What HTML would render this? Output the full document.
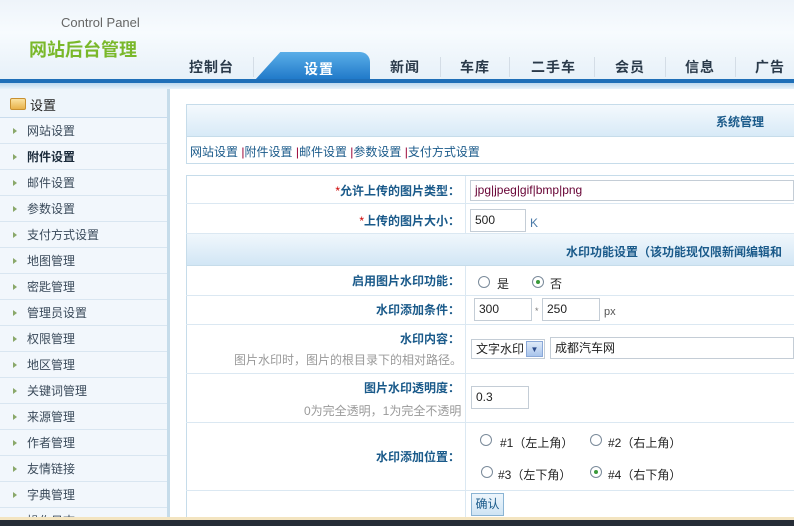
<!DOCTYPE html>
<html><head><meta charset="utf-8"><style>
*{margin:0;padding:0;box-sizing:border-box}
body{width:794px;height:526px;overflow:hidden;position:relative;background:#fff;font-family:"Liberation Sans","Noto Sans CJK SC",sans-serif;font-size:12px;color:#333}
.abs{position:absolute}
#hdr{left:0;top:0;width:794px;height:82px;background:linear-gradient(#eef4fa,#f7fbfe 40%,#e6f0f8)}
#blue{left:0;top:79px;width:794px;height:4px;background:#1f6fb8}
#band{left:0;top:83px;width:794px;height:6px;background:linear-gradient(#bcd8ee,#e8f2fa)}
.tab{top:57px;font-size:14px;font-weight:bold;color:#2a3a4a;letter-spacing:1px}
.sep{top:57px;width:1px;height:20px;background:#d4dde6}
#act{left:255px;top:52px;width:115px;height:28px;background:linear-gradient(#5aaee8,#1f78c8);border-radius:10px 10px 0 0;clip-path:polygon(22% 0,100% 0,100% 100%,0 100%);}
#side{left:0;top:89px;width:170px;height:428px;overflow:hidden;background:#f2f7fc;border-right:3px solid #c6dcea}
.si{position:absolute;left:0;width:167px;height:26px;border-bottom:1px solid #d9e6f1;font-size:12px;color:#3a4a5a;line-height:26px;padding-left:27px}
.si:before{content:"";position:absolute;left:13px;top:10px;border-left:4px solid #8aa86a;border-top:3px solid transparent;border-bottom:3px solid transparent}
.lbl{position:absolute;text-align:right;font-weight:bold;color:#1a5a8a;font-size:12px}
.row{position:absolute;left:186px;width:608px;border-bottom:1px solid #dbe8f2}
.inp{position:absolute;border:1px solid #c4cdd6;background:#fff;font-size:12px;padding-left:4px;color:#222}
.rad{position:absolute;width:12px;height:12px;border:1px solid #7a8a9a;border-radius:50%;background:#fff}
.rad.on:after{content:"";position:absolute;left:3px;top:3px;width:4px;height:4px;border-radius:50%;background:#3a9a3a}
.t{position:absolute;font-size:12px;color:#222;white-space:nowrap}
.g{color:#999}
</style></head><body>
<div id="hdr" class="abs"></div>
<div class="abs" style="left:61px;top:15px;font-size:13px;color:#666">Control Panel</div>
<div class="abs" style="left:29px;top:36px;font-size:18px;font-weight:bold;color:#7ab82a">网站后台管理</div>
<div id="act" class="abs"></div>
<div class="abs tab" style="left:189px">控制台</div>
<div class="sep abs" style="left:253px"></div>
<div class="abs tab" style="left:304px;top:59px;color:#fff">设置</div>
<div class="abs tab" style="left:390px">新闻</div>
<div class="sep abs" style="left:440px"></div>
<div class="abs tab" style="left:460px">车库</div>
<div class="sep abs" style="left:509px"></div>
<div class="abs tab" style="left:531px">二手车</div>
<div class="sep abs" style="left:594px"></div>
<div class="abs tab" style="left:615px">会员</div>
<div class="sep abs" style="left:665px"></div>
<div class="abs tab" style="left:685px">信息</div>
<div class="sep abs" style="left:735px"></div>
<div class="abs tab" style="left:755px">广告</div>
<div id="blue" class="abs"></div><div id="band" class="abs"></div>

<div id="side" class="abs">
<div style="position:absolute;left:0;top:0;width:167px;height:29px;border-bottom:1px solid #c9dced;background:#eef5fb"></div>
<div style="position:absolute;left:10px;top:9px;width:16px;height:12px;background:linear-gradient(#fbe2a0,#e8b24a);border:1px solid #c89030;border-radius:2px"></div>
<div style="position:absolute;left:30px;top:6px;font-size:13px;color:#222">设置</div>
<div class="si" style="top:29px">网站设置</div>
<div class="si" style="top:55px;font-weight:bold;color:#1a2a3a">附件设置</div>
<div class="si" style="top:81px">邮件设置</div>
<div class="si" style="top:107px">参数设置</div>
<div class="si" style="top:133px">支付方式设置</div>
<div class="si" style="top:159px">地图管理</div>
<div class="si" style="top:185px">密匙管理</div>
<div class="si" style="top:211px">管理员设置</div>
<div class="si" style="top:237px">权限管理</div>
<div class="si" style="top:263px">地区管理</div>
<div class="si" style="top:289px">关键词管理</div>
<div class="si" style="top:315px">来源管理</div>
<div class="si" style="top:341px">作者管理</div>
<div class="si" style="top:367px">友情链接</div>
<div class="si" style="top:393px">字典管理</div>
<div class="si" style="top:419px">操作日志</div>
</div>

<div class="abs" style="left:186px;top:104px;width:608px;height:60px;border:1px solid #c6dcea;border-right:none"></div>
<div class="abs" style="left:187px;top:105px;width:607px;height:32px;background:linear-gradient(#f4f9fd,#d8eaf7);border-bottom:1px solid #c6dcea"></div>
<div class="abs" style="left:716px;top:113px;font-weight:bold;color:#1a5a8a">系统管理</div>
<div class="abs" style="left:190px;top:143px;color:#1a5a8a">网站设置 <span style="color:#903">|</span>附件设置 <span style="color:#903">|</span>邮件设置 <span style="color:#903">|</span>参数设置 <span style="color:#903">|</span>支付方式设置</div>

<div class="abs" style="left:186px;top:175px;width:608px;height:345px;border:1px solid #c6dcea;border-right:none"></div>
<div class="abs" style="left:465px;top:176px;width:1px;height:58px;background:#dbe8f2"></div>
<div class="abs" style="left:465px;top:266px;width:1px;height:254px;background:#dbe8f2"></div>
<div class="row" style="top:176px;height:28px"></div>
<div class="lbl" style="left:190px;top:182px;width:270px"><span style="color:#c00;font-weight:normal">*</span>允许上传的图片类型：</div>
<div class="inp" style="left:470px;top:180px;width:324px;height:21px;line-height:19px;color:#603">jpg|jpeg|gif|bmp|png</div>
<div class="row" style="top:204px;height:30px"></div>
<div class="lbl" style="left:190px;top:212px;width:270px"><span style="color:#c00;font-weight:normal">*</span>上传的图片大小：</div>
<div class="inp" style="left:470px;top:209px;width:56px;height:23px;line-height:21px">500</div>
<div class="t" style="left:530px;top:216px;color:#4a7aa8">K</div>
<div class="abs" style="left:187px;top:234px;width:607px;height:32px;background:linear-gradient(#f0f7fc,#d2e6f5);border-bottom:1px solid #c6dcea"></div>
<div class="abs" style="left:566px;top:243px;font-weight:bold;color:#1a5a8a;white-space:nowrap">水印功能设置（该功能现仅限新闻编辑和</div>

<div class="row" style="top:266px;height:30px"></div>
<div class="lbl" style="left:190px;top:272px;width:270px">启用图片水印功能：</div>
<div class="rad" style="left:478px;top:276px"></div><div class="t" style="left:497px;top:275px">是</div>
<div class="rad on" style="left:532px;top:276px"></div><div class="t" style="left:550px;top:275px">否</div>

<div class="row" style="top:296px;height:29px"></div>
<div class="lbl" style="left:190px;top:301px;width:270px">水印添加条件：</div>
<div class="inp" style="left:474px;top:298px;width:58px;height:23px;line-height:21px">300</div>
<div class="t" style="left:535px;top:306px;font-size:9px;color:#777">*</div>
<div class="inp" style="left:542px;top:298px;width:58px;height:23px;line-height:21px">250</div>
<div class="t" style="left:604px;top:306px;color:#555;font-size:11px">px</div>

<div class="row" style="top:325px;height:49px"></div>
<div class="lbl" style="left:190px;top:330px;width:270px">水印内容：</div>
<div class="t g" style="left:234px;top:351px">图片水印时，图片的根目录下的相对路径。</div>
<div class="inp" style="left:471px;top:339px;width:74px;height:20px;line-height:18px">文字水印</div>
<div class="abs" style="left:526px;top:341px;width:17px;height:16px;background:linear-gradient(#dfeaf8,#a8c4ec);border:1px solid #8aa8d8;color:#2a4a8a;font-size:8px;text-align:center;line-height:15px">▼</div>
<div class="inp" style="left:550px;top:337px;width:244px;height:22px;line-height:20px">成都汽车网</div>

<div class="row" style="top:374px;height:49px"></div>
<div class="lbl" style="left:190px;top:379px;width:270px">图片水印透明度：</div>
<div class="t g" style="left:304px;top:402px">0为完全透明，1为完全不透明</div>
<div class="inp" style="left:471px;top:386px;width:58px;height:23px;line-height:21px">0.3</div>

<div class="row" style="top:423px;height:68px"></div>
<div class="lbl" style="left:190px;top:448px;width:270px">水印添加位置：</div>
<div class="rad" style="left:480px;top:434px"></div><div class="t" style="left:500px;top:434px">#1（左上角）</div>
<div class="rad" style="left:590px;top:434px"></div><div class="t" style="left:608px;top:434px">#2（右上角）</div>
<div class="rad" style="left:481px;top:466px"></div><div class="t" style="left:498px;top:466px">#3（左下角）</div>
<div class="rad on" style="left:590px;top:466px"></div><div class="t" style="left:608px;top:466px">#4（右下角）</div>

<div class="abs" style="left:471px;top:493px;width:33px;height:23px;border:1px solid #8ab4d4;background:linear-gradient(#eef6fc,#cfe4f4);color:#1a5a8a;text-align:center;line-height:21px">确认</div>

<div class="abs" style="left:0;top:517px;width:794px;height:3px;background:#f3e4c0"></div>
<div class="abs" style="left:0;top:520px;width:794px;height:6px;background:#262c36"></div>
</body></html>
